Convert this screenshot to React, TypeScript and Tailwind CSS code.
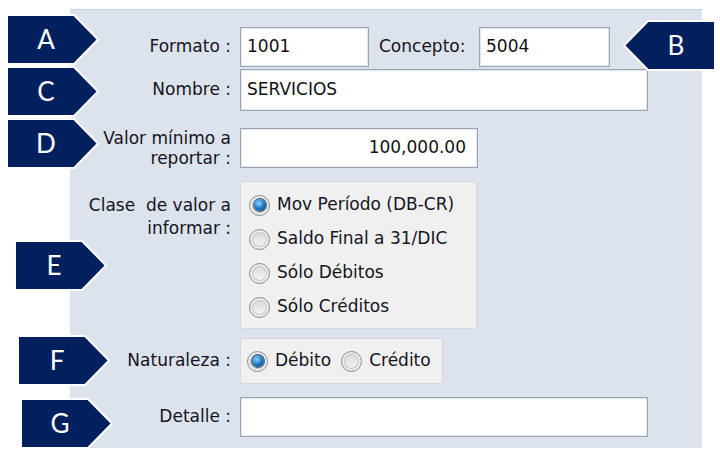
import React from 'react';

type TagProps = {
  letter: string;
  pos: string;
  flip?: boolean;
};

// Navy arrow callout carrying a single letter
const Tag: React.FC<TagProps> = ({ letter, pos, flip }) => (
  <div className={`absolute w-[93px] h-[51px] ${pos}`}>
    <svg width="93" height="51" viewBox="0 0 93 51" className="absolute inset-0">
      <polygon
        points={flip ? '1,25.5 25,1 92,1 92,50 25,50' : '1,1 68,1 92,25.5 68,50 1,50'}
        fill="#03205e"
        stroke="#ffffff"
        strokeWidth="2"
      />
    </svg>
    <span
      className={`absolute top-0 h-[51px] w-[40px] flex items-center justify-center text-white text-[26px] font-['Lato',sans-serif] ${
        flip ? 'right-[20px]' : 'left-[20px]'
      }`}
    >
      {letter}
    </span>
  </div>
);

const fieldClass =
  'h-full bg-white border border-[#9ea5ad] shadow-[inset_0_0_0_1px_#dce8f5] flex items-center text-[#111] px-[6px]';

const Radio: React.FC<{ checked?: boolean }> = ({ checked }) => (
  <span className="w-[21px] h-[21px] rounded-full border border-[#8a8d91] bg-[linear-gradient(#d6d6d6,#f8f8f8)] shadow-[inset_0_0_0_2px_#eeeeee,inset_0_0_0_3px_#c4c4c4] flex items-center justify-center shrink-0">
    {checked && (
      <span className="w-[12px] h-[12px] rounded-full bg-[radial-gradient(circle_at_40%_35%,#8fd3ff,#1c79c2_50%,#0b3d70)] shadow-[0_0_0_1px_#4f6378]" />
    )}
  </span>
);

const Label: React.FC<{ children: React.ReactNode; className?: string }> = ({ children, className }) => (
  <div className={`w-[162px] shrink-0 text-right pr-[1px] ${className ?? ''}`}>{children}</div>
);

export default function App() {
  const options = [
    { text: 'Mov Período (DB-CR)', checked: true },
    { text: 'Saldo Final a 31/DIC' },
    { text: 'Sólo Débitos' },
    { text: 'Sólo Créditos' },
  ];

  return (
    <div className="relative w-[720px] h-[451px] bg-white overflow-hidden font-['DejaVu_Sans',sans-serif] text-[17px] text-[#14141e]">
      <div className="ml-[70px] mt-[9px] w-[632px] h-[439px] bg-[#dde3ed] border-t border-[#c3d3e6] flex flex-col pt-[17px]">
        {/* Formato / Concepto */}
        <div className="flex items-center h-[40px] gap-[8px]">
          <Label>Formato :</Label>
          <div className={`${fieldClass} w-[129px]`}>1001</div>
          <div className="w-[110px] h-full flex items-center pl-[10px] -ml-[8px] mr-[-8px]">Concepto:</div>
          <div className={`${fieldClass} w-[131px]`}>5004</div>
        </div>

        {/* Nombre */}
        <div className="flex items-center h-[42px] gap-[8px] mt-[2px]">
          <Label>Nombre :</Label>
          <div className={`${fieldClass} w-[408px]`}>SERVICIOS</div>
        </div>

        {/* Valor mínimo */}
        <div className="flex items-center h-[40px] gap-[8px] mt-[17px]">
          <Label className="leading-[20px]">
            Valor mínimo a
            <br />
            reportar :
          </Label>
          <div className={`${fieldClass} w-[238px] justify-end pr-[11px]`}>100,000.00</div>
        </div>

        {/* Clase de valor */}
        <div className="flex items-start gap-[8px] mt-[13px]">
          <Label className="leading-[23px] pt-[13px]">
            Clase&nbsp; de valor a
            <br />
            informar :
          </Label>
          <div className="w-[237px] bg-[#f0f0f0] border border-[#d3d8df] rounded-[3px] pt-[6px] pb-[4px] pl-[8px] flex flex-col">
            {options.map((o) => (
              <div key={o.text} className="h-[34px] flex items-center gap-[7px]">
                <Radio checked={o.checked} />
                <span>{o.text}</span>
              </div>
            ))}
          </div>
        </div>

        {/* Naturaleza */}
        <div className="flex items-center h-[46px] gap-[8px] mt-[9px]">
          <Label>Naturaleza :</Label>
          <div className="w-[203px] h-full bg-[#f0f0f0] border border-[#d3d8df] rounded-[3px] flex items-center pl-[6px]">
            <Radio checked />
            <span className="ml-[7px]">Débito</span>
            <span className="ml-[10px]">
              <Radio />
            </span>
            <span className="ml-[7px]">Crédito</span>
          </div>
        </div>

        {/* Detalle */}
        <div className="flex items-center h-[40px] gap-[8px] mt-[13px]">
          <Label>Detalle :</Label>
          <div className={`${fieldClass} w-[408px]`} />
        </div>
      </div>

      <Tag letter="A" pos="left-[6px] top-[14px]" />
      <Tag letter="B" pos="left-[623px] top-[20px]" flip />
      <Tag letter="C" pos="left-[6px] top-[66px]" />
      <Tag letter="D" pos="left-[6px] top-[118px]" />
      <Tag letter="E" pos="left-[14px] top-[240px]" />
      <Tag letter="F" pos="left-[17px] top-[335px]" />
      <Tag letter="G" pos="left-[20px] top-[398px]" />
    </div>
  );
}
